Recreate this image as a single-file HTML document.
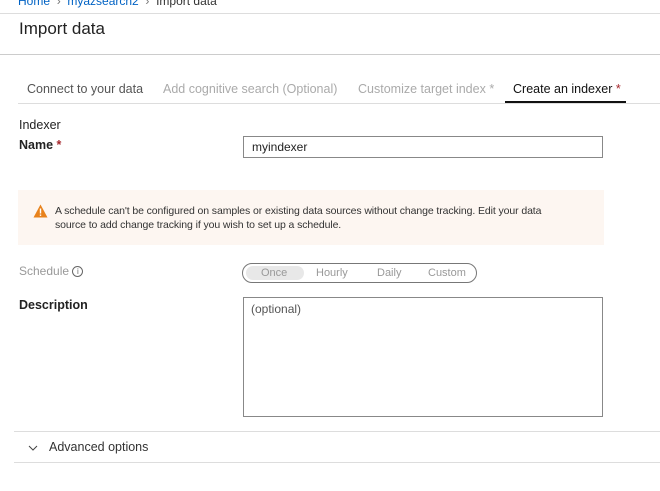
<!DOCTYPE html>
<html><head><style>
body{margin:0;width:660px;height:491px;background:#fff;font-family:"Liberation Sans",sans-serif;color:#222;position:relative;overflow:hidden}
.a{position:absolute;white-space:nowrap}
</style></head><body>
<div class="a" style="left:18px;top:-6px;font-size:12px;color:#333"><span style="color:#0062c4">Home</span> &nbsp;<span style="color:#777">›</span>&nbsp; <span style="color:#0062c4">myazsearch2</span> &nbsp;<span style="color:#777">›</span>&nbsp; Import data</div>
<div class="a" style="left:0;top:13px;width:660px;height:1px;background:#ddd"></div>
<div class="a" style="left:19px;top:19px;font-size:17px;color:#222">Import data</div>
<div class="a" style="left:0;top:54px;width:660px;height:1px;background:#ccc"></div>
<div class="a" style="left:27px;top:82px;font-size:12.5px;color:#555">Connect to your data</div>
<div class="a" style="left:163px;top:82px;font-size:12.5px;color:#aaa">Add cognitive search (Optional)</div>
<div class="a" style="left:358px;top:82px;font-size:12.5px;color:#aaa">Customize target index <span>*</span></div>
<div class="a" style="left:513px;top:82px;font-size:12.5px;color:#111">Create an indexer <span style="color:#a4262c">*</span></div>
<div class="a" style="left:18px;top:103px;width:642px;height:1px;background:#ddd"></div>
<div class="a" style="left:505px;top:101px;width:121px;height:2px;background:#111"></div>
<div class="a" style="left:19px;top:118px;font-size:12.5px">Indexer</div>
<div class="a" style="left:19px;top:138px;font-size:12.5px;font-weight:bold">Name <span style="color:#a4262c">*</span></div>
<div class="a" style="left:243px;top:136px;border:1px solid #888;font-size:12px;line-height:20px;padding-left:8px;box-sizing:border-box;width:360px;height:22px">myindexer</div>
<div class="a" style="left:18px;top:190px;width:586px;height:55px;background:#fdf6f1"></div>
<svg class="a" style="left:33px;top:204px" width="15" height="14" viewBox="0 0 15 14"><path d="M7.5 0.5L14.5 13.5H0.5Z" fill="#e8821c"/><rect x="6.8" y="4.5" width="1.4" height="5" fill="#fff"/><rect x="6.8" y="10.5" width="1.4" height="1.4" fill="#fff"/></svg>
<div class="a" style="left:55px;top:205px;font-size:10.5px;line-height:13.5px;color:#333;white-space:normal;width:515px;letter-spacing:-0.1px">A schedule can't be configured on samples or existing data sources without change tracking. Edit your data source to add change tracking if you wish to set up a schedule.</div>
<div class="a" style="left:19px;top:264px;font-size:12px;color:#999">Schedule <span style="display:inline-block;width:9px;height:9px;border:1px solid #666;border-radius:50%;font-size:8px;line-height:9px;text-align:center;color:#666;vertical-align:1px">i</span></div>
<div class="a" style="left:242px;top:263px;width:235px;height:20px;border:1px solid #777;border-radius:10px;box-sizing:border-box"></div>
<div class="a" style="left:246px;top:266px;width:58px;height:14px;background:#e8e8e8;border-radius:7px"></div>
<div class="a" style="left:261px;top:267px;font-size:11px;color:#999">Once</div>
<div class="a" style="left:316px;top:267px;font-size:11px;color:#999">Hourly</div>
<div class="a" style="left:377px;top:267px;font-size:11px;color:#999">Daily</div>
<div class="a" style="left:428px;top:267px;font-size:11px;color:#999">Custom</div>
<div class="a" style="left:19px;top:298px;font-size:12.5px;font-weight:bold">Description</div>
<div class="a" style="left:243px;top:297px;width:360px;height:120px;border:1px solid #888;box-sizing:border-box;font-size:12px;color:#555;padding:4px 7px">(optional)</div>
<div class="a" style="left:14px;top:431px;width:646px;height:1px;background:#ddd"></div>
<svg class="a" style="left:28px;top:445px" width="10" height="7"><path d="M1 1L5 5L9 1" stroke="#444" fill="none"/></svg>
<div class="a" style="left:49px;top:440px;font-size:12.5px;color:#333">Advanced options</div>
<div class="a" style="left:14px;top:462px;width:646px;height:1px;background:#ddd"></div>
</body></html>
